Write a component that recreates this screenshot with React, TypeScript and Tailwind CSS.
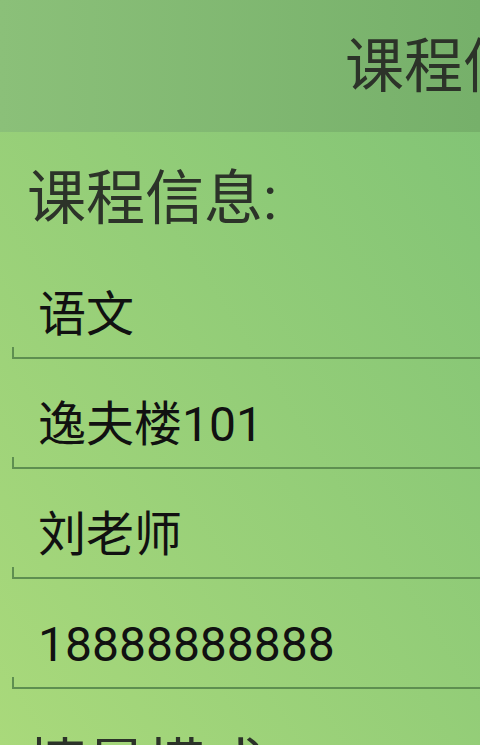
const fields = ["语文", "逸夫楼101", "刘老师", "18888888888"];

function Field({ value }: { value: string }) {
  return (
    <div className="h-[110px] flex flex-col justify-end pl-[12px]">
      <div className="pl-[26px] h-[64px] leading-[64px] text-[48px] text-[#111] whitespace-nowrap">
        {value}
      </div>
      <div className="h-[12px] border-l-2 border-b-2 border-[#5e8f50]" />
    </div>
  );
}

export default function App() {
  return (
    <div
      className="w-[480px] h-[745px] overflow-hidden bg-[linear-gradient(to_top_right,#a9d97b,#7fc275)]"
      style={{ fontFamily: "Roboto, 'Noto Sans CJK SC', sans-serif" }}
    >
      {/* Title bar */}
      <div className="h-[132px] flex items-center pl-[345px] overflow-hidden bg-[linear-gradient(to_right,#8bc079,#76b06a)]">
        <span className="text-[59px] leading-none text-[#2c3329] whitespace-nowrap">课程信息</span>
      </div>

      <div className="h-[117px] pt-[16px] pl-[27px] flex items-center">
        <span className="text-[59px] leading-none text-[#2c3329] whitespace-nowrap">课程信息:</span>
      </div>

      {fields.map((f) => (
        <Field key={f} value={f} />
      ))}

      <div className="h-[110px] pt-[48px] pl-[28px]">
        <span className="text-[59px] leading-none text-[#2c3329] whitespace-nowrap">情景模式</span>
      </div>
    </div>
  );
}
